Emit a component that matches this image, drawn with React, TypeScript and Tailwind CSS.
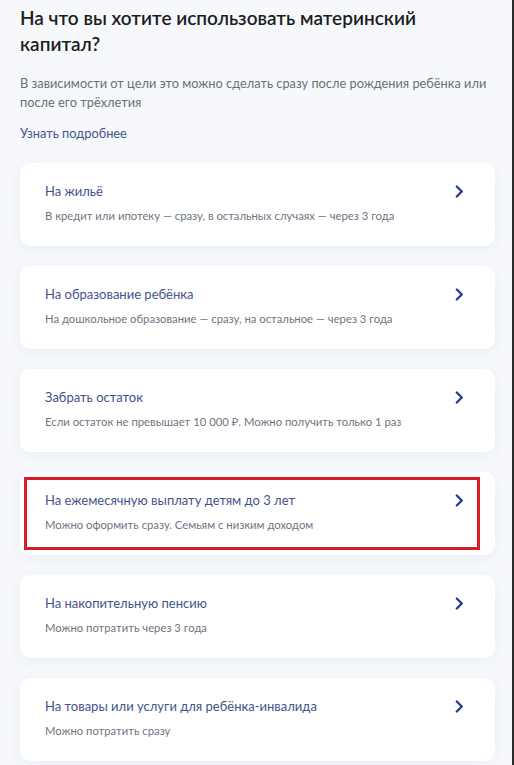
import React from "react";

const items = [
  { t: "На жильё", s: "В кредит или ипотеку — сразу, в остальных случаях — через 3 года" },
  { t: "На образование ребёнка", s: "На дошкольное образование — сразу, на остальное — через 3 года" },
  { t: "Забрать остаток", s: "Если остаток не превышает 10 000 ₽. Можно получить только 1 раз" },
  { t: "На ежемесячную выплату детям до 3 лет", s: "Можно оформить сразу. Семьям с низким доходом", hl: true },
  { t: "На накопительную пенсию", s: "Можно потратить через 3 года" },
  { t: "На товары или услуги для ребёнка-инвалида", s: "Можно потратить сразу" },
];

function Chevron() {
  return (
    <svg width="9" height="13" viewBox="0 0 9 13" fill="none" className="shrink-0">
      <path d="M1.8 1.5 L6.8 6.5 L1.8 11.5" stroke="#27398f" strokeWidth="2.3" strokeLinecap="round" strokeLinejoin="round" />
    </svg>
  );
}

export default function App() {
  return (
    <div
      className="w-[514px] h-[765px] overflow-hidden bg-[#f6f8fb] border-r-2 border-[#2a2a2a]"
      style={{ fontFamily: "Lato, 'Noto Sans', sans-serif" }}
    >
      <div className="pl-[20px] pr-[17px] pt-[5px]">
        <h1 className="text-[19px] leading-[26px] font-semibold text-[#1c1d22] w-[430px]">
          На что вы хотите использовать материнский капитал?
        </h1>
        <p className="mt-[17px] text-[12.8px] leading-[19px] text-[#66707b]">
          В зависимости от цели это можно сделать сразу после рождения ребёнка или после его трёхлетия
        </p>
        <p className="mt-[12px] text-[12.8px] leading-[19px] text-[#47568f]">Узнать подробнее</p>
        <div className="mt-[20px] flex flex-col gap-[20px] w-[475px]">
          {items.map((it) => (
            <div
              key={it.t}
              className="relative h-[83px] bg-white rounded-[10px] shadow-[0_3px_14px_rgba(40,80,160,0.06)] pl-[25px] pr-[31px] pt-[18px]"
            >
              <div className="flex items-center justify-between h-[20px]">
                <span className="text-[13px] leading-[20px] text-[#44528c]">{it.t}</span>
                <Chevron />
              </div>
              <div className="mt-[6px] text-[11.3px] leading-[18px] text-[#6e757f]">{it.s}</div>
              {it.hl && (
                <div className="absolute left-[4px] right-[15px] top-[5px] bottom-[5px] border-[3px] border-[#d81b2b]" />
              )}
            </div>
          ))}
        </div>
      </div>
    </div>
  );
}
